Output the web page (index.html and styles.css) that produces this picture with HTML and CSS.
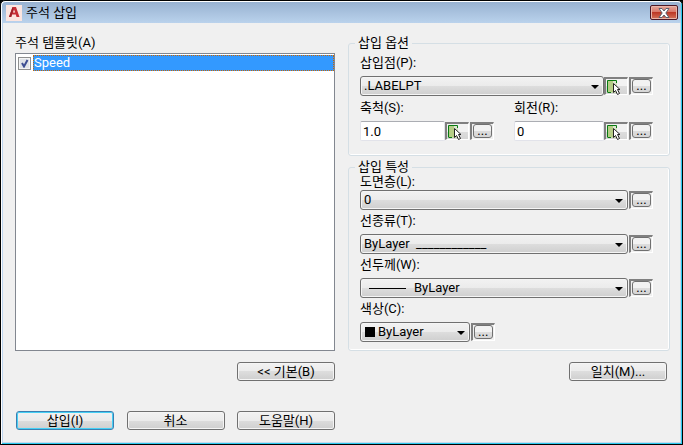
FILE: index.html
```html
<!DOCTYPE html>
<html lang="ko">
<head>
    <meta charset="UTF-8">
    <meta name="viewport" content="width=device-width, initial-scale=1.0">
    <title>주석 삽입</title>
    <link rel="stylesheet" href="styles.css">
</head>
<body>
    <svg class="sprite" aria-hidden="true">
        <symbol id="pick" viewBox="0 0 24 18">
            <path d="M3 2.500H12.500V14.500H3.500V2.500" fill="#b5cd86"/>
            <path d="M9 3H12V14H9z" fill="#dfe8d0"/>
            <path d="M3.500 14V2.500H12.500V5M3.500 14.500H7M12.500 12V15" fill="none" stroke="#087a12"/>
            <path d="M9.500 5.500V14.500L11.500 12.500L13.500 16.500L15.500 15.500L13.500 11.500H16z" fill="#fff" stroke="#222"/>
        </symbol>
    </svg>
    <form class="dialog">
        <header class="titlebar">
            <svg class="app-icon" viewBox="0 0 16 16" aria-hidden="true">
                <rect width="16" height="16" fill="#fbe5e0"/>
                <path d="M3 12L6.500 2H10L13.500 12H10.500L9.800 9.500H6L5.200 12z" fill="#c72c34"/>
                <path d="M8 4.500L7 7.500H9.200z" fill="#fbe5e0"/>
                <path d="M3 12L6.500 2L7.500 4L5.200 12z" fill="#9e2029"/>
            </svg>
            <h1>주석 삽입</h1>
            <button type="button" class="close" aria-label="닫기">
                <svg viewBox="0 0 14 10" aria-hidden="true">
                    <path d="M2 .5H5L7 3L9 .5H12L8.800 5L12 9.500H9L7 7L5 9.500H2L5.200 5z" fill="#fff" stroke="#59606e"/>
                </svg>
            </button>
        </header>

        <main class="content">
            <section class="templates">
                <h2>주석 템플릿(A)</h2>
                <div class="list">
                    <div class="list-item">
                        <input type="checkbox" id="speed" checked>
                        <label for="speed">Speed</label>
                    </div>
                </div>
            </section>

            <div class="settings">
                <fieldset class="options">
                    <legend>삽입 옵션</legend>
                    <div class="field">
                        <label for="point">삽입점(P):</label>
                        <div class="row">
                            <select id="point"><option>.LABELPT</option></select>
                            <button type="button" class="tool" aria-label="삽입점 선택"><svg><use href="#pick"/></svg></button>
                            <button type="button" class="tool more"><span>...</span></button>
                        </div>
                    </div>
                    <div class="pair">
                        <div class="field">
                            <label for="scale">축척(S):</label>
                            <div class="row">
                                <input type="text" id="scale" value="1.0">
                                <button type="button" class="tool" aria-label="축척 선택"><svg><use href="#pick"/></svg></button>
                                <button type="button" class="tool more"><span>...</span></button>
                            </div>
                        </div>
                        <div class="field">
                            <label for="rotation">회전(R):</label>
                            <div class="row">
                                <input type="text" id="rotation" value="0">
                                <button type="button" class="tool" aria-label="회전 선택"><svg><use href="#pick"/></svg></button>
                                <button type="button" class="tool more"><span>...</span></button>
                            </div>
                        </div>
                    </div>
                </fieldset>

                <fieldset class="properties">
                    <legend>삽입 특성</legend>
                    <div class="field">
                        <label for="layer">도면층(L):</label>
                        <div class="row">
                            <select id="layer"><option>0</option></select>
                            <button type="button" class="tool more"><span>...</span></button>
                        </div>
                    </div>
                    <div class="field">
                        <label for="linetype">선종류(T):</label>
                        <div class="row">
                            <select id="linetype"><option>ByLayer&nbsp; ____________</option></select>
                            <button type="button" class="tool more"><span>...</span></button>
                        </div>
                    </div>
                    <div class="field">
                        <label for="lineweight">선두께(W):</label>
                        <div class="row">
                            <select id="lineweight" class="weight"><option>ByLayer</option></select>
                            <button type="button" class="tool more"><span>...</span></button>
                        </div>
                    </div>
                    <div class="field half">
                        <label for="color">색상(C):</label>
                        <div class="row">
                            <select id="color" class="color"><option>ByLayer</option></select>
                            <button type="button" class="tool more"><span>...</span></button>
                        </div>
                    </div>
                </fieldset>
            </div>

            <div class="side-action"><button type="button" class="btn">&lt;&lt; 기본(B)</button></div>
            <div class="side-action match"><button type="button" class="btn">일치(M)...</button></div>

            <footer class="actions">
                <button type="submit" class="btn primary">삽입(I)</button>
                <button type="button" class="btn">취소</button>
                <button type="button" class="btn">도움말(H)</button>
            </footer>
        </main>
    </form>
</body>
</html>
```
FILE: styles.css
```css
* {
    box-sizing: border-box;
}
body {
    margin: 0;
    background: #000;
    color: #000;
    font: 13px/14px Roboto, "Noto Sans CJK KR", sans-serif;
}
h1, h2 {
    margin: 0;
    font-size: 13px;
    font-weight: normal;
}
button, input, select {
    margin: 0;
    font: inherit;
    color: inherit;
}
.sprite {
    display: none;
}
.dialog {
    display: flex;
    flex-direction: column;
    min-height: 100vh;
    background: #f0f0f0;
    border: 1px solid #000;
    border-radius: 5px 5px 0 0;
    box-shadow: inset 1px 1px #fff, inset -1px -1px #2bc9ee, inset 2px 0 #bdd5ef, inset -2px -2px #c5d9ec;
}

/* title bar */
.titlebar {
    display: flex;
    align-items: center;
    gap: 4px;
    height: 21px;
    margin: 1px 1px 0;
    padding: 0 3px 0 4px;
    border-radius: 4px 4px 0 0;
    background: linear-gradient(#98b2d1, #bad2ec);
}
.titlebar h1 {
    flex: 1;
}
.app-icon {
    width: 16px;
    height: 16px;
}
.close {
    display: flex;
    align-items: center;
    justify-content: center;
    width: 28px;
    height: 15px;
    padding: 0;
    border: 1px solid #4c1826;
    border-radius: 2px;
    background: linear-gradient(#e5a79b, #d8786a 45%, #bd3826 50%, #d4735b);
    box-shadow: inset 0 0 0 1px #e8b5a9;
}
.close svg {
    width: 14px;
    height: 10px;
}

/* body of the dialog */
.content {
    display: grid;
    grid-template-columns: minmax(0, 320fr) minmax(0, 322fr);
    column-gap: 13px;
    padding: 13px 12px 12px 14px;
}
.templates {
    display: flex;
    flex-direction: column;
    gap: 3px;
}
.list {
    flex: 1;
    padding: 1px 0 1px 2px;
    background: #fff;
    border: 1px solid #828790;
}
.list-item {
    display: flex;
    align-items: center;
}
.list-item input {
    appearance: none;
    width: 13px;
    height: 13px;
    margin: 0 2px 0 0;
    border: 1px solid #8e8f8f;
    background: url("data:image/svg+xml,%3Csvg xmlns='http://www.w3.org/2000/svg' viewBox='0 0 11 11'%3E%3Cpath d='M3 5l2 3.500L8.500 2' fill='none' stroke='%233c4e92' stroke-width='2'/%3E%3C/svg%3E") #dfe3e8;
    box-shadow: inset 0 0 0 1px #f4f4f4;
}
.list-item label {
    flex: 1;
    height: 16px;
    color: #fff;
    background: #3399ff;
    border: 1px dotted #cc6600;
}

/* groups */
fieldset {
    min-width: 0;
    margin: 0;
    padding: 6px 16px 14px 11px;
    border: 1px solid #d5dfe5;
    border-radius: 3px;
    box-shadow: inset 0 -1px #fff, inset -1px 0 #fff;
}
legend {
    height: 14px;
    margin-left: -5px;
    padding: 0 3px;
}
.properties {
    margin-top: 4px;
    padding-top: 1px;
    padding-bottom: 8px;
}
.field + .field, .field + .pair {
    margin-top: 5px;
}
.field label {
    display: block;
    margin-bottom: 6px;
}
.properties .field + .field {
    margin-top: 4px;
}
.properties .field:first-of-type label {
    margin-bottom: 1px;
}
.pair {
    display: grid;
    grid-template-columns: minmax(0, 134fr) minmax(0, 139fr);
    gap: 20px;
}
.pair .field {
    margin: 0;
}
.half {
    width: 46%;
}
.row {
    display: flex;
    align-items: center;
}
.row input, .row select {
    flex: 1;
    min-width: 0;
    height: 20px;
    padding: 0 3px;
}
.row input {
    padding: 0 2px;
    border: 1px solid #e2e3ea;
    border-top-color: #abadb3;
    border-radius: 2px;
    background: #fff;
}
.row select {
    --arrow: url("data:image/svg+xml,%3Csvg xmlns='http://www.w3.org/2000/svg' width='8' height='4'%3E%3Cpath d='M0 0h8L4 4z'/%3E%3C/svg%3E") no-repeat right 4px top 8px;
    --face: linear-gradient(#f2f2f2, #ebebeb 50%, #dddddd 50%, #cfcfcf);
    appearance: none;
    border: 1px solid #707070;
    border-radius: 3px;
    background: var(--arrow), var(--face);
    box-shadow: inset 0 0 0 1px #f5f5f5;
}
.row .weight {
    padding-left: 53px;
    background: linear-gradient(#000, #000) 8px 9px / 37px 1px no-repeat, var(--arrow), var(--face);
}
.row .color {
    padding-left: 17px;
    background: linear-gradient(#000, #000) 4px 4px / 10px 10px no-repeat, var(--arrow), var(--face);
}

/* small buttons beside the fields */
.tool {
    flex: none;
    width: 24px;
    height: 18px;
    padding: 0;
    border: 1px solid #fff;
    border-top: 2px solid #808080;
    border-left: 2px solid #808080;
    background: linear-gradient(#f2f2f2 50%, #dddddd 50%, #d5d5d5);
}
.tool svg {
    display: block;
    width: 24px;
    height: 18px;
    margin: -2px;
}
.more {
    margin-left: 1px;
    background: #f0f0f0;
}
.more span {
    display: block;
    height: 14px;
    margin: 0 1px 1px;
    border: 1px solid #707070;
    border-radius: 3px;
    background: linear-gradient(#f2f2f2 50%, #dddddd 50%, #d5d5d5);
    line-height: 12px;
}

/* push buttons */
.btn {
    width: 98px;
    height: 19px;
    padding: 0;
    border: 1px solid #707070;
    border-radius: 3px;
    background: linear-gradient(#f2f2f2, #ebebeb 50%, #dddddd 50%, #cfcfcf);
    box-shadow: inset 0 0 0 1px #f5f5f5;
}
.primary {
    border-color: #3c7fb1;
    box-shadow: inset 0 0 0 1px #46d0f5;
}
.side-action {
    display: flex;
    justify-content: flex-end;
    margin-top: 11px;
}
.match {
    padding-right: 3px;
}
.actions {
    display: flex;
    justify-content: space-between;
    margin-top: 30px;
    padding-left: 1px;
}
```
